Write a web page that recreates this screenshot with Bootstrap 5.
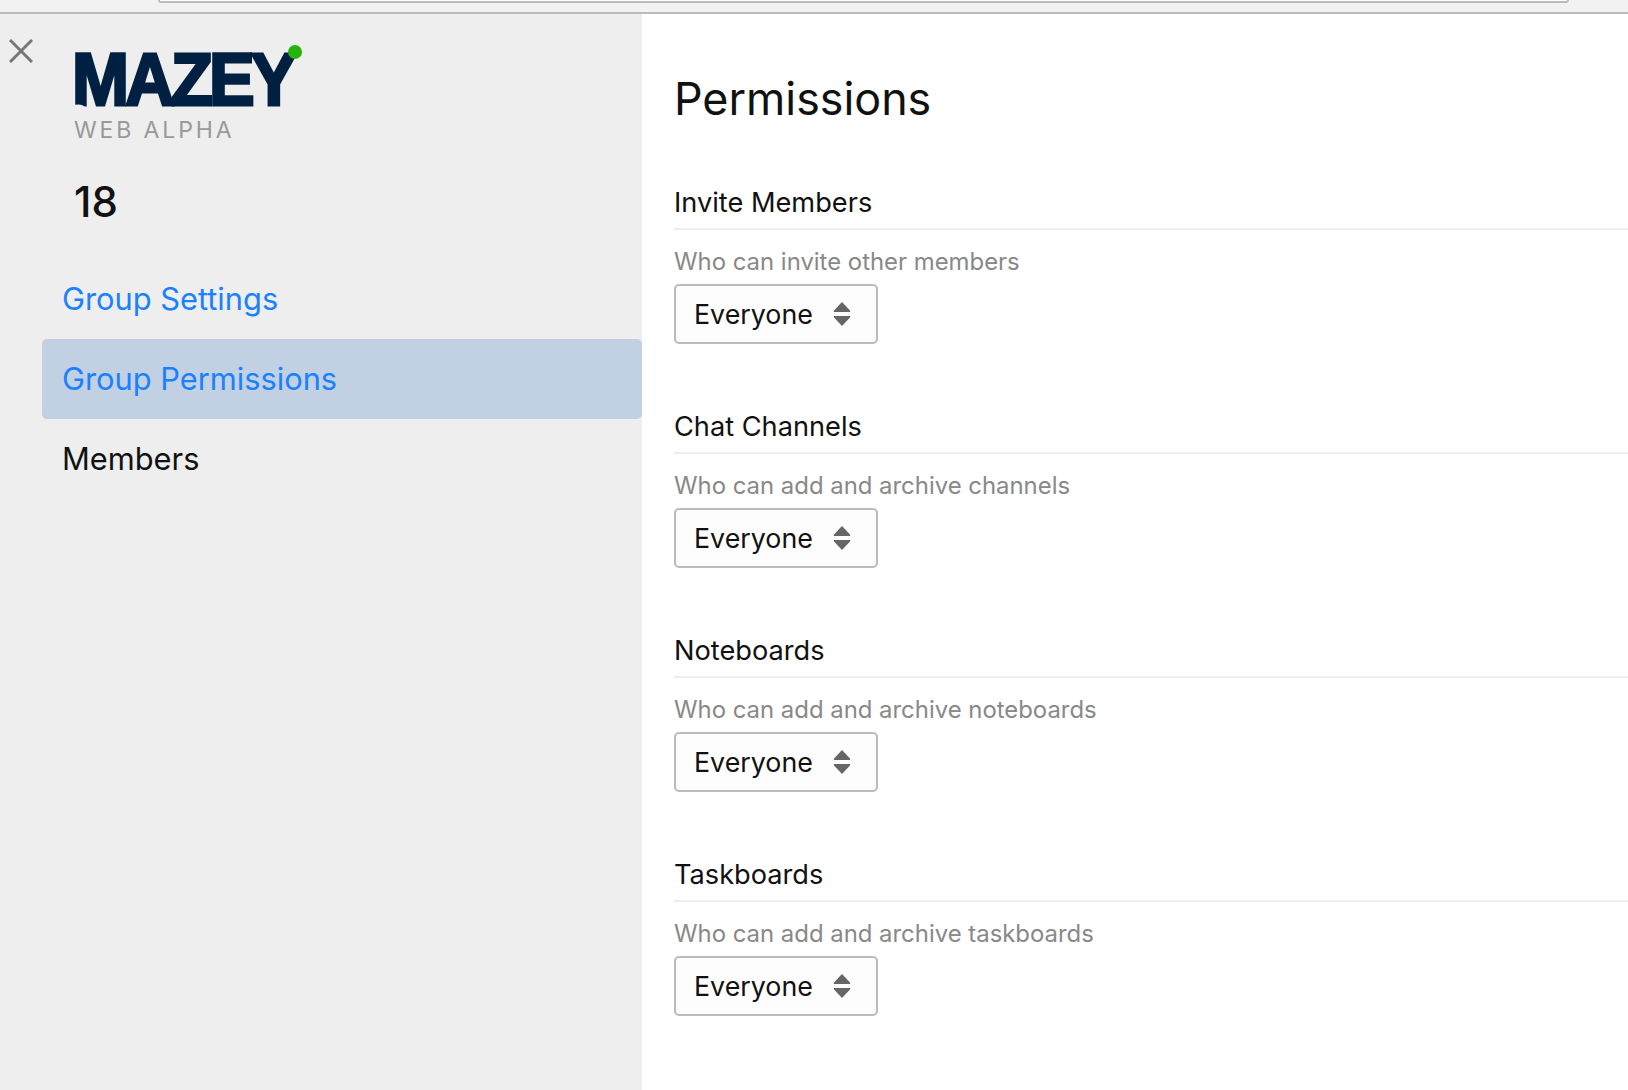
<!doctype html>
<html lang="en">
<head>
<meta charset="utf-8">
<title>Permissions</title>
<link href="https://cdn.jsdelivr.net/npm/bootstrap@5.3.0/dist/css/bootstrap.min.css" rel="stylesheet">
<style>
html,body{height:100%;overflow:hidden}
body{font-family:Inter,"Liberation Sans",sans-serif;color:#111;background:#fff}
.chrome-bar{height:14px;background:#f2f2f2;border-bottom:2px solid #bbb}
.url-box{height:3px;margin:0 59px 0 158px;background:#fff;border:2px solid #bbb;border-top:0;border-radius:0 0 6px 6px}
.app-shell{height:1076px}
.side-pane{width:642px;flex:none;background:#eee}
.close-btn{width:24px;height:24px;margin:25px 0 0 9px;line-height:0}
.brand-col{padding:22px 0 0 41px}
.brand-logo{display:block;width:236px;height:88px;margin-bottom:-8px;overflow:visible}
.brand-word{font-family:"Liberation Sans",sans-serif;font-weight:700;font-size:74px;letter-spacing:-4px}
.brand-sub{font-size:23px;line-height:28px;letter-spacing:2.9px;color:#999;margin:0 0 0 0}
.group-num{font-size:42px;line-height:50px;margin:33px 0 0 0;color:#111;font-weight:500}
.side-links{padding:32px 0 0 42px}
.side-link{display:block;height:80px;line-height:80px;padding-left:20px;font-size:30.800px;color:#1a81ff;text-decoration:none;border-radius:5px}
.side-link.is-on{background:#c2d0e3}
.side-link.is-plain{color:#111}
.main-pane{padding:0 0 0 32px;min-width:0}
.page-title{font-size:44.800px;font-weight:400;line-height:56px;margin:57px 0 58px;color:#111}
.perm-block{height:224px}
.perm-head{font-size:27.200px;font-weight:400;line-height:36px;padding-bottom:7px;margin:0;border-bottom:2px solid #eee}
.perm-note{font-size:23.900px;line-height:30px;color:#888;margin:17px 0 7px}
.perm-select.form-select{width:204px;height:60px;padding:0 0 0 18px;font-size:26.800px;color:#111;background-color:#fdfdfd;border:2px solid #bbb;border-radius:5px;background-size:18px 26px;background-position:right 25px center;background-image:url("data:image/svg+xml,%3Csvg xmlns='http://www.w3.org/2000/svg' viewBox='0 0 18 26'%3E%3Cpath fill='%23666' d='M9 1l8 8.500c.6.800.2 1.500-.8 1.500H1.800c-1 0-1.400-.7-.8-1.500zM9 25l8-8.500c.6-.8.2-1.500-.8-1.500H1.800c-1 0-1.400.7-.8 1.500z'/%3E%3C/svg%3E")}
</style>
</head>
<body>
<div class="chrome-bar"><div class="url-box"></div></div>
<div class="app-shell d-flex">
  <aside class="side-pane">
    <div class="d-flex">
      <div class="close-btn">
        <svg width="24" height="24" viewBox="0 0 24 24" aria-hidden="true"><path d="M1 1l22 22M23 1L1 23" stroke="#777" stroke-width="3" fill="none"/></svg>
      </div>
      <div class="brand-col">
        <svg class="brand-logo" viewBox="0 0 236 88" role="img" aria-label="MAZEY">
          <text class="brand-word" x="-2" y="69" textLength="221" lengthAdjust="spacingAndGlyphs" fill="#002042" stroke="#002042" stroke-width="3">MAZEY</text>
          <ellipse cx="4" cy="71.500" rx="7" ry="3" fill="#eee"/>
          <circle cx="221" cy="16" r="7" fill="#25b40a"/>
        </svg>
        <div class="brand-sub">WEB ALPHA</div>
        <div class="group-num">18</div>
      </div>
    </div>
    <nav class="side-links">
      <a class="side-link" href="#">Group Settings</a>
      <a class="side-link is-on" href="#">Group Permissions</a>
      <a class="side-link is-plain" href="#">Members</a>
    </nav>
  </aside>
  <main class="main-pane flex-grow-1">
    <h1 class="page-title">Permissions</h1>
    <section class="perm-block">
      <h2 class="perm-head">Invite Members</h2>
      <p class="perm-note">Who can invite other members</p>
      <select class="form-select perm-select"><option>Everyone</option></select>
    </section>
    <section class="perm-block">
      <h2 class="perm-head">Chat Channels</h2>
      <p class="perm-note">Who can add and archive channels</p>
      <select class="form-select perm-select"><option>Everyone</option></select>
    </section>
    <section class="perm-block">
      <h2 class="perm-head">Noteboards</h2>
      <p class="perm-note">Who can add and archive noteboards</p>
      <select class="form-select perm-select"><option>Everyone</option></select>
    </section>
    <section class="perm-block">
      <h2 class="perm-head">Taskboards</h2>
      <p class="perm-note">Who can add and archive taskboards</p>
      <select class="form-select perm-select"><option>Everyone</option></select>
    </section>
  </main>
</div>
<script src="https://cdn.jsdelivr.net/npm/bootstrap@5.3.0/dist/js/bootstrap.bundle.min.js"></script>
</body>
</html>
